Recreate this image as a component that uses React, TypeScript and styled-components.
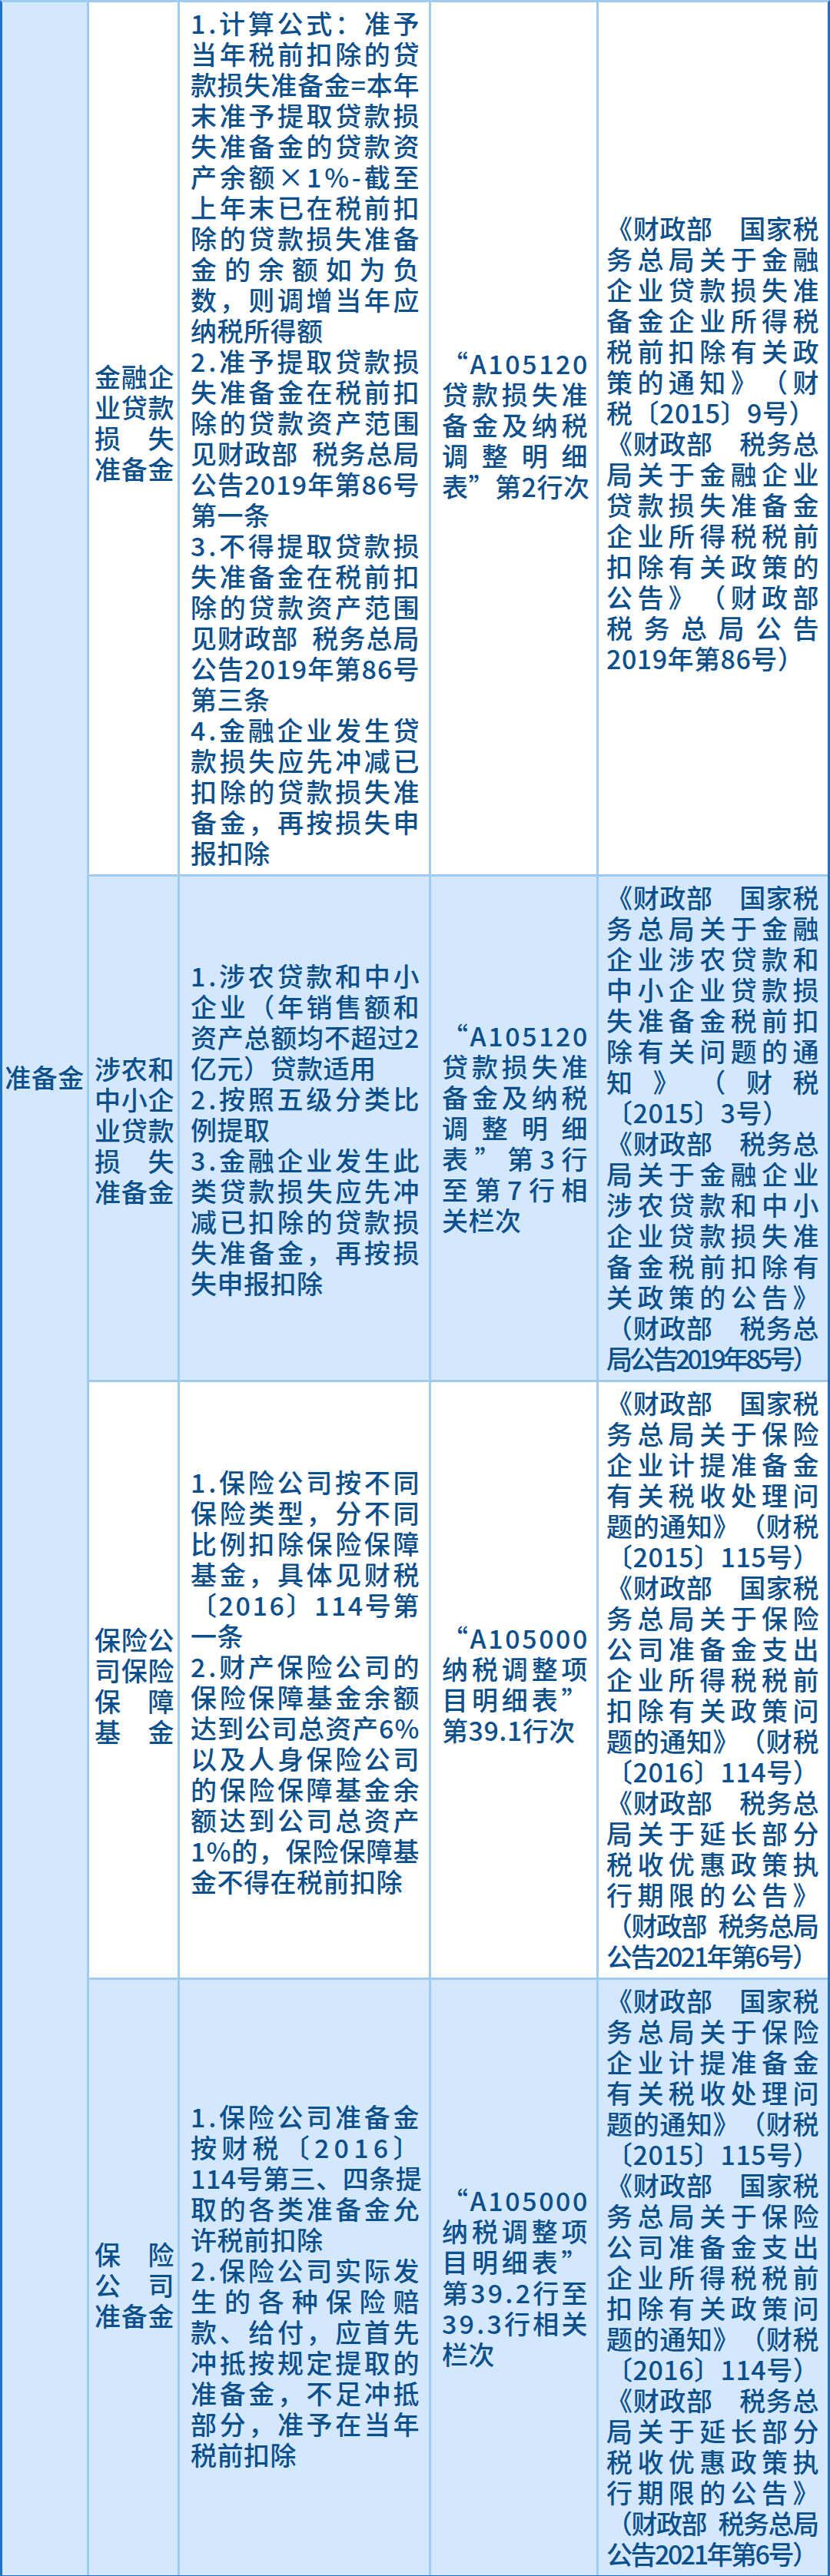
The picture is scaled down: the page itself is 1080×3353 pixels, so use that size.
import React from 'react';
import styled, { createGlobalStyle } from 'styled-components';

const ink = '#0b4f8c';
const tint = '#d3e8fd';
const rule = '#a0cbf1';
const frame = '#1d72c7';

const GlobalStyle = createGlobalStyle`
  html, body {
    margin: 0;
    padding: 0;
    background: #ffffff;
  }
`;

const Table = styled.div`
  display: grid;
  grid-template-columns: 110px 115px 324px 215px 298px;
  gap: 3px;
  box-sizing: border-box;
  width: 1080px;
  background: ${rule};
  border: 3px solid ${frame};
  border-top-color: ${rule};
  color: ${ink};
  font-family: "Noto Sans CJK SC", "Noto Sans", sans-serif;
  font-size: 34px;
  font-weight: 500;
  line-height: 40px;
  letter-spacing: 0.5px;
`;

// the category cell spans every row; its label sits well above the middle
const Side = styled.div`
  grid-column: 1;
  grid-row: 1 / span 4;
  background: ${tint};
  padding-top: 1379px;
  text-align: center;
`;

const Cell = styled.div<{ $tint: boolean; $left: number; $right: number; $shift: number }>`
  display: flex;
  flex-direction: column;
  justify-content: center;
  background: ${p => (p.$tint ? tint : '#ffffff')};
  padding-top: ${p => 7 + Math.max(0, p.$shift * 2)}px;
  padding-bottom: ${p => 8 + Math.max(0, -p.$shift * 2)}px;
  padding-left: ${p => p.$left}px;
  padding-right: ${p => p.$right}px;
`;

const Spread = styled.div`
  display: flex;
  justify-content: space-between;
  white-space: pre;
`;

const Glyph = styled.span`
  flex: none;
`;

const Tail = styled.div<{ $ls: number }>`
  white-space: pre;
  letter-spacing: ${p => p.$ls}px;
`;

type Line = string | { text: string; ls: number };
type Block = { lines: Line[]; shift?: number };
type Row = { tint: boolean; cells: Block[] };

const end = (text: string, ls = 0.5): Line => ({ text, ls });

const pads = [
  { left: 7, right: 4 },
  { left: 14, right: 12 },
  { left: 14, right: 11 },
  { left: 10, right: 11 },
];

const insuranceBasis: Line[] = [
  '《财政部　国家税',
  '务总局关于保险',
  '企业计提准备金',
  '有关税收处理问',
  '题的通知》（财税',
  end('〔2015〕115号）'),
  '《财政部　国家税',
  '务总局关于保险',
  '公司准备金支出',
  '企业所得税税前',
  '扣除有关政策问',
  '题的通知》（财税',
  end('〔2016〕114号）'),
  '《财政部　税务总',
  '局关于延长部分',
  '税收优惠政策执',
  '行期限的公告》',
  end('（财政部\u2002税务总局', -1.5),
  end('公告2021年第6号）', -2.5),
];

const rows: Row[] = [
  {
    tint: false,
    cells: [
      { lines: ['金融企', '业贷款', '损　失', '准备金'], shift: -20 },
      {
        lines: [
          '1.计算公式：准予',
          '当年税前扣除的贷',
          '款损失准备金=本年',
          '末准予提取贷款损',
          '失准备金的贷款资',
          '产余额×1%-截至',
          '上年末已在税前扣',
          '除的贷款损失准备',
          '金的余额如为负',
          '数，则调增当年应',
          end('纳税所得额'),
          '2.准予提取贷款损',
          '失准备金在税前扣',
          '除的贷款资产范围',
          '见财政部\u2002税务总局',
          '公告2019年第86号',
          end('第一条'),
          '3.不得提取贷款损',
          '失准备金在税前扣',
          '除的贷款资产范围',
          '见财政部\u2002税务总局',
          '公告2019年第86号',
          end('第三条'),
          '4.金融企业发生贷',
          '款损失应先冲减已',
          '扣除的贷款损失准',
          '备金，再按损失申',
          end('报扣除'),
        ],
      },
      { lines: ['“A105120', '贷款损失准', '备金及纳税', '调整明细', end('表”第2行次')], shift: -17 },
      {
        lines: [
          '《财政部　国家税',
          '务总局关于金融',
          '企业贷款损失准',
          '备金企业所得税',
          '税前扣除有关政',
          '策的通知》（财',
          end('税〔2015〕9号）'),
          '《财政部　税务总',
          '局关于金融企业',
          '贷款损失准备金',
          '企业所得税税前',
          '扣除有关政策的',
          '公告》（财政部',
          '税务总局公告',
          end('2019年第86号）'),
        ],
        shift: 7,
      },
    ],
  },
  {
    tint: true,
    cells: [
      { lines: ['涉农和', '中小企', '业贷款', '损　失', '准备金'], shift: 3 },
      {
        lines: [
          '1.涉农贷款和中小',
          '企业（年销售额和',
          '资产总额均不超过2',
          end('亿元）贷款适用'),
          '2.按照五级分类比',
          end('例提取'),
          '3.金融企业发生此',
          '类贷款损失应先冲',
          '减已扣除的贷款损',
          '失准备金，再按损',
          end('失申报扣除'),
        ],
        shift: 2,
      },
      { lines: ['“A105120', '贷款损失准', '备金及纳税', '调整明细', '表”第3行', '至第7行相', end('关栏次')] },
      {
        lines: [
          '《财政部　国家税',
          '务总局关于金融',
          '企业涉农贷款和',
          '中小企业贷款损',
          '失准备金税前扣',
          '除有关问题的通',
          '知》（财税',
          end('〔2015〕3号）'),
          '《财政部　税务总',
          '局关于金融企业',
          '涉农贷款和中小',
          '企业贷款损失准',
          '备金税前扣除有',
          '关政策的公告》',
          '（财政部　税务总',
          end('局公告2019年85号）', -4),
        ],
      },
    ],
  },
  {
    tint: false,
    cells: [
      { lines: ['保险公', '司保险', '保　障', '基　金'], shift: 8 },
      {
        lines: [
          '1.保险公司按不同',
          '保险类型，分不同',
          '比例扣除保险保障',
          '基金，具体见财税',
          '〔2016〕114号第',
          end('一条'),
          '2.财产保险公司的',
          '保险保障基金余额',
          '达到公司总资产6%',
          '以及人身保险公司',
          '的保险保障基金余',
          '额达到公司总资产',
          '1%的，保险保障基',
          end('金不得在税前扣除'),
        ],
        shift: 3,
      },
      { lines: ['“A105000', '纳税调整项', '目明细表”', end('第39.1行次')], shift: 6 },
      { lines: insuranceBasis },
    ],
  },
  {
    tint: true,
    cells: [
      { lines: ['保　险', '公　司', '准备金'], shift: 10 },
      {
        lines: [
          '1.保险公司准备金',
          '按财税〔2016〕',
          '114号第三、四条提',
          '取的各类准备金允',
          end('许税前扣除'),
          '2.保险公司实际发',
          '生的各种保险赔',
          '款、给付，应首先',
          '冲抵按规定提取的',
          '准备金，不足冲抵',
          '部分，准予在当年',
          end('税前扣除'),
        ],
        shift: 11,
      },
      { lines: ['“A105000', '纳税调整项', '目明细表”', '第39.2行至', '39.3行相关', end('栏次')] },
      { lines: insuranceBasis },
    ],
  },
];

function TextLine({ line }: { line: Line }) {
  if (typeof line === 'string') {
    return (
      <Spread>
        {Array.from(line).map((ch, i) => (
          <Glyph key={i}>{ch}</Glyph>
        ))}
      </Spread>
    );
  }
  return <Tail $ls={line.ls}>{line.text}</Tail>;
}

export default function App() {
  return (
    <>
      <GlobalStyle />
      <Table>
        <Side>准备金</Side>
        {rows.map((row, r) =>
          row.cells.map((cell, c) => (
            <Cell
              key={`${r}-${c}`}
              $tint={row.tint}
              $left={pads[c].left}
              $right={pads[c].right}
              $shift={cell.shift ?? 0}
            >
              {cell.lines.map((line, i) => (
                <TextLine key={i} line={line} />
              ))}
            </Cell>
          )),
        )}
      </Table>
    </>
  );
}
